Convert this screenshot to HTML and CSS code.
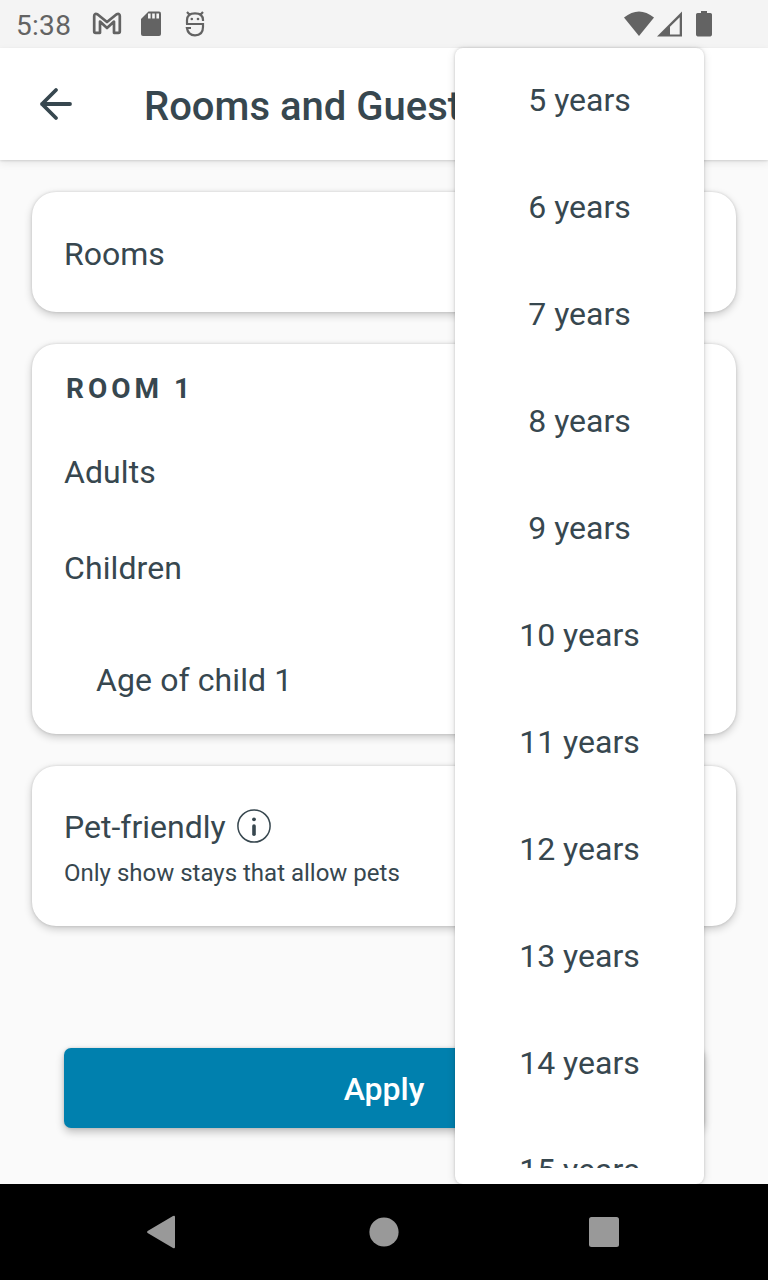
FILE: index.html
```
<!DOCTYPE html>
<html lang="en">
<head>
<meta charset="utf-8">
<title>Rooms and Guests</title>
<link rel="stylesheet" href="styles.css">
</head>
<body>
<div class="screen">
  <div class="status">
    <span class="clock">5:38</span>
    <svg class="ic-mail" width="30" height="26" viewBox="0 0 30 26"><path d="M5.400 3.300Q2.200 2 2.200 5V20.400Q2.200 21.800 3.600 21.800H8V10.600L15 17L22 10.600V21.800H26.400Q27.800 21.800 27.800 20.400V5Q27.800 2 24.600 3.300L15 11Z" fill="none" stroke="#636363" stroke-width="2.700" stroke-linejoin="round"/></svg>
    <svg class="ic-sd" width="20" height="26" viewBox="0 0 20 26"><path d="M7.500 0.500H18Q20 .5 20 2.500V23Q20 25 18 25H2Q0 25 0 23V8Z" fill="#636363"/><path d="M7 2.500h2.600v5H7zM11.200 2.500h2.600v5h-2.600zM15.400 2.500H18v5h-2.600z" fill="#f4f4f4"/></svg>
    <svg class="ic-bug" width="20" height="28" viewBox="0 0 20 28"><g fill="none" stroke="#636363" stroke-width="2.200"><path d="M2 14V10Q2 3.300 10 3.300Q18 3.300 18 10V11M1 14H18V17Q18 25.300 10 25.300Q3 25.100 1.900 18H6M2 2L4.800 5M18 2L15.200 5"/></g><circle cx="6.800" cy="9" r="1.300" fill="#636363"/><circle cx="13" cy="9" r="1.300" fill="#636363"/></svg>
    <span class="grow"></span>
    <svg width="90" height="28" viewBox="0 0 90 28" fill="#636363"><path d="M0 7.500Q15-4.500 30 7.500L15 26Z"/><path fill-rule="evenodd" d="M33 26.400L58 1.600V26.400ZM46 24.400H55.700V7.200L46 16.800Z"/><path d="M77 1h6v2h3.400q1.600 0 1.600 1.600v20q0 1.800-1.600 1.800H73.600Q72 26.400 72 24.600V4.600Q72 3 73.600 3H77Z"/></svg>
  </div>
  <header class="appbar">
    <svg width="34" height="34" viewBox="0 0 34 34"><path d="M17 3L3 17L17 31M3 17H31" fill="none" stroke="#37474f" stroke-width="3.800" stroke-linecap="round" stroke-linejoin="round"/></svg>
    <h1 class="title">Rooms and Guests</h1>
  </header>
  <main class="content">
    <section class="card rooms">Rooms</section>
    <section class="card room">
      <h2 class="room-title">ROOM 1</h2>
      <div class="row">Adults</div>
      <div class="row">Children</div>
      <div class="row child">Age of child 1</div>
    </section>
    <section class="card pets">
      <div class="pet-line">Pet-friendly
        <svg width="34" height="34" viewBox="0 0 34 34"><circle cx="17" cy="17" r="16.100" fill="none" stroke="#37474f" stroke-width="1.500"/><circle cx="17" cy="10.300" r="1.900" fill="#37474f"/><path d="M17 17V25.200" stroke="#37474f" stroke-width="3.600" stroke-linecap="round"/></svg>
      </div>
      <div class="pet-note">Only show stays that allow pets</div>
    </section>
    <button class="apply">Apply</button>
  </main>
  <nav class="navbar">
    <svg width="768" height="96" viewBox="0 0 768 96" fill="#999"><path d="M173 32Q175 31 175 33V63Q175 65 173 64L147.600 49Q146.400 48 147.600 47Z"/><circle cx="384" cy="48" r="14.600"/><rect x="589" y="33" width="30" height="30" rx="2.500"/></svg>
  </nav>
  <div class="menu">
    <ul class="options">
      <li>5 years</li><li>6 years</li><li>7 years</li><li>8 years</li><li>9 years</li><li>10 years</li><li>11 years</li><li>12 years</li><li>13 years</li><li>14 years</li><li>15 years</li>
    </ul>
  </div>
</div>
</body>
</html>
```
FILE: styles.css
```
* { box-sizing: border-box; }
body { margin: 0; font-family: Roboto, "Liberation Sans", sans-serif; color: #37474f; }
svg { display: block; flex: none; }
.screen { position: relative; width: 768px; height: 1280px; display: flex; flex-direction: column; background: #fafafa; overflow: hidden; }
.status { height: 48px; flex: none; display: flex; align-items: flex-start; padding: 10px 54px 0 16px; background: #f4f4f4; }
.clock { width: 76px; font-size: 28px; line-height: 31px; color: #636363; letter-spacing: .3px; }
.ic-mail { margin-top: 1px; }
.ic-sd { margin: 1px 24px 0 19px; }
.grow { flex: 1; }
.appbar { height: 112px; flex: none; display: flex; align-items: center; padding-left: 39px; background: #fff; box-shadow: 0 1px 2px rgba(0,0,0,.12), 0 3px 8px rgba(0,0,0,.08); }
.title { margin: 6px 0 0 71px; font-size: 40px; line-height: 48px; font-weight: 500; white-space: nowrap; }
.content { flex: 1; display: flex; flex-direction: column; gap: 32px; padding: 32px; }
.card { flex: none; background: #fff; border-radius: 24px; padding: 0 32px; font-size: 32px; box-shadow: 0 0 3px rgba(0,0,0,.14), 0 3px 8px rgba(0,0,0,.2); }
.rooms { height: 120px; padding-top: 4px; line-height: 116px; }
.room { height: 390px; padding-top: 26px; }
.room-title { margin: 0 0 0 2px; height: 54px; font-size: 28px; line-height: 38px; font-weight: 700; letter-spacing: 4px; }
.row { height: 96px; line-height: 96px; letter-spacing: .1px; }
.child { height: 128px; line-height: 128px; padding-left: 32px; }
.pets { height: 160px; padding-top: 41px; }
.pet-line { display: flex; gap: 11px; line-height: 40px; }
.pet-line svg { margin-top: 2px; }
.pet-note { margin-top: 10px; font-size: 24px; line-height: 32px; }
.apply { height: 80px; margin: 90px 32px 0; flex: none; border: 0; border-radius: 7px; background: #0080ae; color: #fff; font: 500 32px/78px Roboto, sans-serif; padding: 2px 0 0; box-shadow: 0 0 3px rgba(0,0,0,.14), 0 4px 8px rgba(0,0,0,.24); }
.navbar { height: 96px; flex: none; background: #000; position: relative; }
.menu { position: absolute; left: 455px; top: 48px; width: 249px; height: 1136px; padding-bottom: 16px; background: #fff; border-radius: 8px; box-shadow: 0 0 3px rgba(0,0,0,.18), 0 2px 10px rgba(0,0,0,.12); }
.options { height: 1120px; margin: 0; padding: 0; list-style: none; overflow: hidden; }
.options li { height: 107px; line-height: 105px; text-align: center; font-size: 32px; }
```
